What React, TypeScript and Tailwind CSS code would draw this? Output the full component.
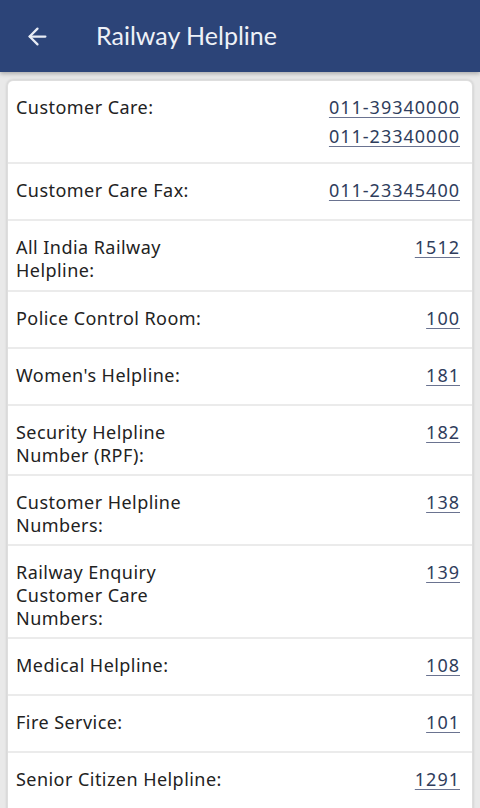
import { ArrowLeft } from "lucide-react";

type Helpline = {
  label: string;
  numbers: string[];
  rowClass?: string;
};

const helplines: Helpline[] = [
  { label: "Customer Care:", numbers: ["011-39340000", "011-23340000"], rowClass: "min-h-[83px]" },
  { label: "Customer Care Fax:", numbers: ["011-23345400"] },
  { label: "All India Railway\nHelpline:", numbers: ["1512"], rowClass: "min-h-[71px]" },
  { label: "Police Control Room:", numbers: ["100"] },
  { label: "Women's Helpline:", numbers: ["181"] },
  { label: "Security Helpline\nNumber (RPF):", numbers: ["182"] },
  { label: "Customer Helpline\nNumbers:", numbers: ["138"] },
  { label: "Railway Enquiry\nCustomer Care\nNumbers:", numbers: ["139"] },
  { label: "Medical Helpline:", numbers: ["108"] },
  { label: "Fire Service:", numbers: ["101"] },
  { label: "Senior Citizen Helpline:", numbers: ["1291"] },
];

export default function App() {
  return (
    <div
      className="w-[480px] h-[808px] overflow-hidden bg-[#e9e9e9] flex flex-col"
      style={{ fontFamily: "'Noto Sans', 'Open Sans', sans-serif" }}
    >
      {/* ================= HEADER ================= */}
      <header className="h-[72px] shrink-0 bg-[#2c4478] flex items-center shadow-[0_2px_4px_rgba(0,0,0,0.25)] z-10">
        <div className="w-[96px] pl-[24px] flex items-center">
          <ArrowLeft size={27} strokeWidth={2} className="text-[#e8ecf5]" />
        </div>
        <h1
          className="text-[25px] leading-none text-[#eef1f7] font-normal pb-[2px]"
          style={{ fontFamily: "Lato, sans-serif" }}
        >
          Railway Helpline
        </h1>
      </header>

      {/* ================= LIST CARD ================= */}
      <div className="flex-1 px-[7px] pt-[8px]">
        <div className="bg-white rounded-t-[6px] shadow-[0_0_3px_rgba(0,0,0,0.18)] border border-[#dedede]">
          {helplines.map((h) => (
            <div
              key={h.label}
              className={`flex justify-between items-start pl-[8px] pr-[12px] pt-[15px] pb-[7px] border-b-2 border-[#ebebeb] min-h-[57px] ${h.rowClass ?? ""}`}
            >
              <div className="text-[18px] leading-[23px] text-[#222] tracking-[0.45px] whitespace-pre-line">
                {h.label}
              </div>
              <div className="flex flex-col items-end gap-[6px]">
                {h.numbers.map((n) => (
                  <a
                    key={n}
                    href="#"
                    className="text-[18px] leading-[23px] text-[#2f3d5c] underline underline-offset-[3px] decoration-[#6a7390] tracking-[1px]"
                  >
                    {n}
                  </a>
                ))}
              </div>
            </div>
          ))}
        </div>
      </div>
    </div>
  );
}
